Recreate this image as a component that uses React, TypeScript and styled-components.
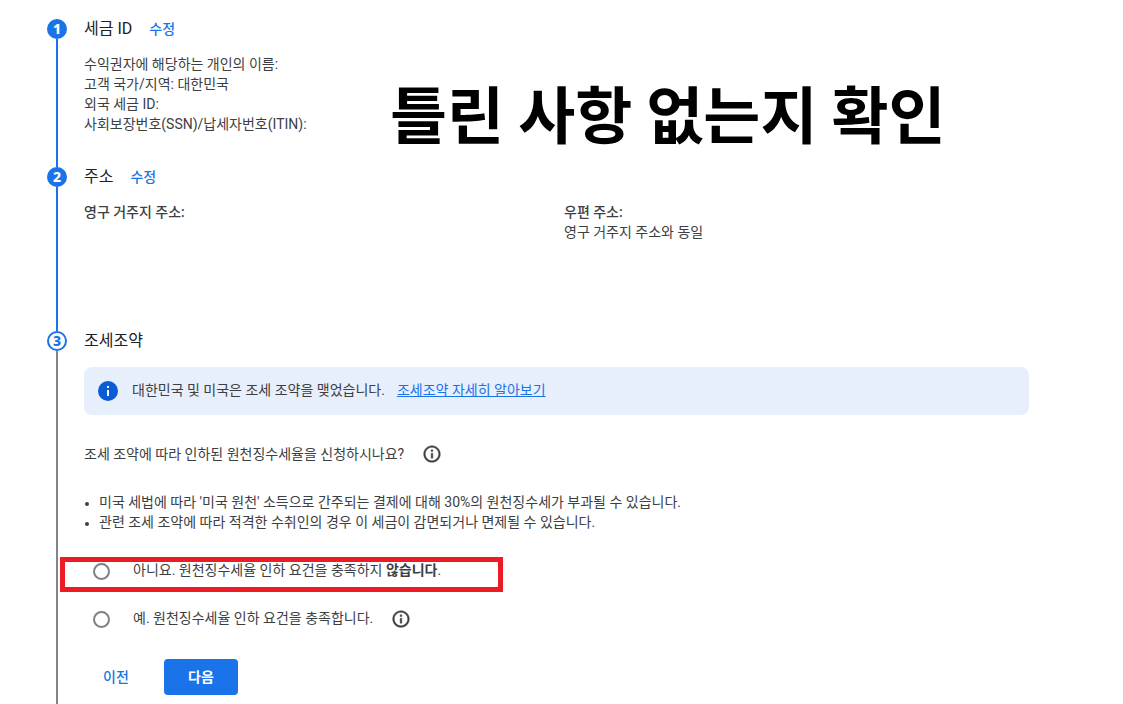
import React from 'react';
import styled, { createGlobalStyle } from 'styled-components';

const GlobalStyle = createGlobalStyle`
  * { box-sizing: border-box; }
  body {
    margin: 0;
    background: #fff;
    color: #3c4043;
    font-family: Roboto, "Noto Sans CJK KR", sans-serif;
    font-size: 14px;
    line-height: 20px;
    overflow-x: hidden;
  }
`;

const Page = styled.main`
  position: relative;
  padding: 17px 94px 0 47px;
`;

const Steps = styled.ol`
  list-style: none;
  margin: 0;
  padding: 0;
`;

const Step = styled.li<{ $height?: number }>`
  display: flex;
  gap: 17px;
  min-height: ${({ $height }) => ($height ? `${$height}px` : 'auto')};
`;

const Rail = styled.div`
  display: flex;
  flex-direction: column;
  align-items: center;
  flex: 0 0 20px;
  margin: 2px 0 -2px;
`;

const Marker = styled.span<{ $current?: boolean }>`
  display: flex;
  align-items: center;
  justify-content: center;
  flex: 0 0 20px;
  width: 20px;
  border: 2px solid #1a73e8;
  border-radius: 50%;
  background: ${({ $current }) => ($current ? '#fff' : '#1a73e8')};
  color: ${({ $current }) => ($current ? '#1a73e8' : '#fff')};
  font-family: "Noto Sans", sans-serif;
  font-size: 14px;
  font-weight: 800;
  line-height: 16px;
`;

const Line = styled.span<{ $pending?: boolean }>`
  flex: 1;
  width: 2px;
  background: ${({ $pending }) => ($pending ? '#80868b' : '#1a73e8')};
`;

const Content = styled.div`
  flex: 1;
  min-width: 0;
`;

const Heading = styled.header`
  display: flex;
  align-items: center;
  gap: 17px;
  height: 24px;
`;

const Title = styled.h2`
  margin: 0;
  color: #202124;
  font-size: 16px;
  font-weight: 400;
  line-height: 24px;
`;

const TextLink = styled.a`
  color: #1a73e8;
`;

const EditLink = styled(TextLink)`
  font-weight: 500;
  text-decoration: none;
`;

const Details = styled.div`
  margin-top: 13px;
`;

const Addresses = styled.div`
  display: grid;
  grid-template-columns: 480px 1fr;
  margin-top: 13px;
`;

const Label = styled.div`
  font-weight: 500;
`;

const Banner = styled.div`
  display: flex;
  align-items: center;
  height: 48px;
  margin-top: 14px;
  padding: 0 14px;
  border-radius: 8px;
  background: #e8effc;

  svg { margin-right: 14px; }
  a { margin-left: 12px; }
  span, a { padding-bottom: 2px; }
`;

const Question = styled.div`
  display: flex;
  align-items: center;
  gap: 18px;
  margin-top: 29px;
`;

const Notes = styled.ul`
  list-style: disc;
  margin: 28px 0 0;
  padding-left: 15px;

  li::marker { font-size: 12px; }
`;

const Options = styled.fieldset`
  margin: 15px 0 0;
  padding: 0;
  border: 0;
`;

const Option = styled.div`
  position: relative;
  display: flex;
  align-items: center;
  height: 48px;
  padding-left: 9px;

  label { padding-bottom: 2px; }
  svg { margin-left: 18px; }
`;

const Radio = styled.input`
  appearance: none;
  width: 17px;
  height: 17px;
  margin: 0 23px 0 0;
  border: 2px solid #7d8185;
  border-radius: 50%;
  background: #fff;

  &:checked { box-shadow: inset 0 0 0 3px #fff; background: #1a73e8; }
`;

const Highlight = styled.div`
  position: absolute;
  top: 10px;
  left: -24px;
  width: 443px;
  height: 35px;
  border: 5px solid #ed1c24;
  pointer-events: none;
`;

const Actions = styled.div`
  display: flex;
  gap: 16px;
  margin-top: 16px;
  padding-bottom: 9px;
`;

const Button = styled.button<{ $primary?: boolean }>`
  height: 36px;
  min-width: ${({ $primary }) => ($primary ? '74px' : '64px')};
  padding: 0;
  border: 0;
  border-radius: 4px;
  background: ${({ $primary }) => ($primary ? '#1a73e8' : 'transparent')};
  color: ${({ $primary }) => ($primary ? '#fff' : '#1a73e8')};
  font: inherit;
  font-weight: ${({ $primary }) => ($primary ? 700 : 500)};
`;

const Annotation = styled.p`
  position: absolute;
  top: 68px;
  left: 390px;
  margin: 0;
  color: #000;
  font-family: "Noto Sans CJK KR", sans-serif;
  font-size: 62px;
  font-weight: 700;
  line-height: 88px;
  white-space: nowrap;
`;

const InfoOutline = () => (
  <svg width="20" height="20" viewBox="0 0 24 24" fill="#3c4043" stroke="#3c4043" strokeWidth="0.5" aria-hidden="true">
    <path d="M11 7h2v2h-2zm0 4h2v6h-2zm1-9C6.480 2 2 6.480 2 12s4.480 10 10 10 10-4.480 10-10S17.520 2 12 2zm0 18c-4.410 0-8-3.590-8-8s3.590-8 8-8 8 3.590 8 8-3.590 8-8 8z" />
  </svg>
);

const InfoFilled = () => (
  <svg width="20" height="20" viewBox="0 0 20 20" aria-hidden="true">
    <circle cx="10" cy="10" r="10" fill="#0b5cd7" />
    <path d="M9 5h2v2H9zM9 9h2v6H9z" fill="#fff" />
  </svg>
);

export default function App() {
  return (
    <>
      <GlobalStyle />
      <Page>
        <Steps>
          <Step $height={148}>
            <Rail>
              <Marker>1</Marker>
              <Line />
            </Rail>
            <Content>
              <Heading>
                <Title>세금 ID</Title>
                <EditLink href="#tax-id">수정</EditLink>
              </Heading>
              <Details>
                <div>수익권자에 해당하는 개인의 이름:</div>
                <div>고객 국가/지역: 대한민국</div>
                <div>외국 세금 ID:</div>
                <div>사회보장번호(SSN)/납세자번호(ITIN):</div>
              </Details>
            </Content>
          </Step>

          <Step $height={164}>
            <Rail>
              <Marker>2</Marker>
              <Line />
            </Rail>
            <Content>
              <Heading>
                <Title>주소</Title>
                <EditLink href="#address">수정</EditLink>
              </Heading>
              <Addresses>
                <Label>영구 거주지 주소:</Label>
                <div>
                  <Label>우편 주소:</Label>
                  <div>영구 거주지 주소와 동일</div>
                </div>
              </Addresses>
            </Content>
          </Step>

          <Step>
            <Rail>
              <Marker $current>3</Marker>
              <Line $pending />
            </Rail>
            <Content>
              <Heading>
                <Title>조세조약</Title>
              </Heading>
              <Banner>
                <InfoFilled />
                <span>대한민국 및 미국은 조세 조약을 맺었습니다.</span>
                <TextLink href="#treaty">조세조약 자세히 알아보기</TextLink>
              </Banner>
              <Question>
                <span id="treaty-question">조세 조약에 따라 인하된 원천징수세율을 신청하시나요?</span>
                <InfoOutline />
              </Question>
              <Notes>
                <li>미국 세법에 따라 '미국 원천' 소득으로 간주되는 결제에 대해 30%의 원천징수세가 부과될 수 있습니다.</li>
                <li>관련 조세 조약에 따라 적격한 수취인의 경우 이 세금이 감면되거나 면제될 수 있습니다.</li>
              </Notes>
              <Options aria-labelledby="treaty-question">
                <Option>
                  <Radio type="radio" name="treaty" id="treaty-no" />
                  <label htmlFor="treaty-no">
                    아니요. 원천징수세율 인하 요건을 충족하지 <b>않습니다</b>.
                  </label>
                  <Highlight />
                </Option>
                <Option>
                  <Radio type="radio" name="treaty" id="treaty-yes" />
                  <label htmlFor="treaty-yes">예. 원천징수세율 인하 요건을 충족합니다.</label>
                  <InfoOutline />
                </Option>
              </Options>
              <Actions>
                <Button type="button">이전</Button>
                <Button type="button" $primary>다음</Button>
              </Actions>
            </Content>
          </Step>
        </Steps>
        <Annotation>틀린 사항 없는지 확인</Annotation>
      </Page>
    </>
  );
}
